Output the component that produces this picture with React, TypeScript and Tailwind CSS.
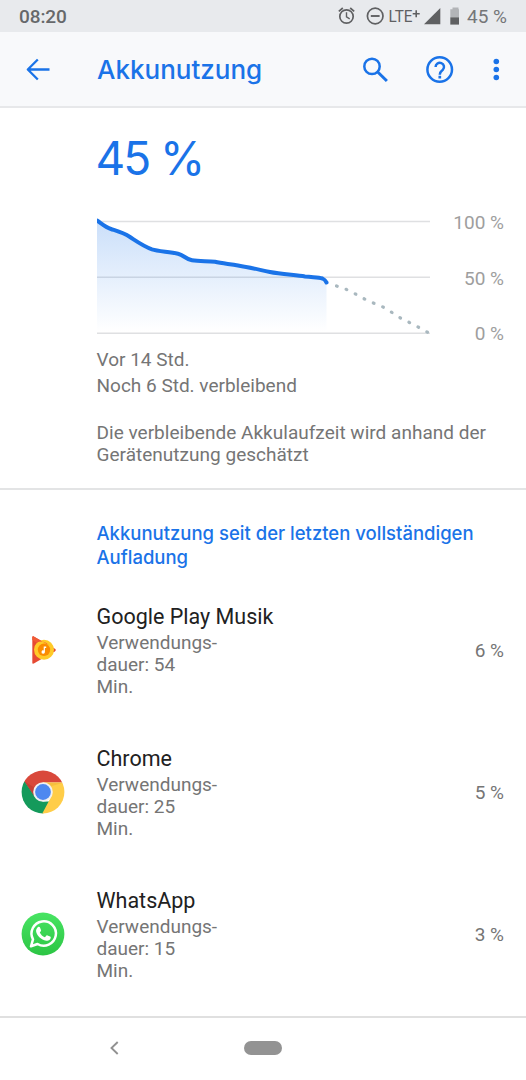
import React from "react";

const body = "font-['Roboto',sans-serif] text-[#757575] text-[19px] leading-[22.3px]";

function PlayMusicIcon() {
  return (
    <svg className="h-[44px] w-[44px]" viewBox="0 0 44 44">
      <path d="M11.3 9.2v25.6c0 .8.8 1.200 1.500.8L34 23.300c1-.6 1-2 0-2.600L12.800 8.400c-.7-.4-1.500 0-1.500.8z" fill="#e64a33" />
      <circle cx="23" cy="21.700" r="10" fill="#ffca28" />
      <path d="M12.700 8.400 28 17.200a9.700 9.700 0 0 0-12.500-2.400L11.300 12V9.200c0-.8.7-1.200 1.400-.8z" fill="#f05a35" />
      <circle cx="23" cy="21.800" r="6.200" fill="#fb8c00" />
      <path d="M22.700 18.500h2.500v1.600h-1.300v4a1.700 1.700 0 1 1-1.200-1.600z" fill="#fff" />
    </svg>
  );
}

function ChromeIcon() {
  return (
    <svg className="h-[44px] w-[44px]" viewBox="0 0 44 44">
      <defs>
        <clipPath id="chrome-disc"><circle cx="22" cy="22" r="21.400" /></clipPath>
      </defs>
      <g clipPath="url(#chrome-disc)">
        <path d="M0 0h44v12.500H22L13.700 27 0 7z" fill="#d9483b" />
        <path d="M3.500 11.500 13.800 26.800 22 31.500h8.500L22 44H0V11z" fill="#149a5b" />
        <path d="M22 12.500h22V44H21l9.200-17.200z" fill="#ffcd48" />
        <path d="M22 12.500h21l-15.500 4.500z" fill="#e6a62d" opacity=".35" />
        <path d="m3.500 11.500 9.400 14.900 2-8z" fill="#9c3025" opacity=".3" />
      </g>
      <circle cx="22" cy="22" r="9.800" fill="#f1f1f1" />
      <circle cx="22" cy="22" r="7.900" fill="#4d88f0" />
    </svg>
  );
}

function WhatsAppIcon() {
  return (
    <svg className="h-[44px] w-[44px]" viewBox="0 0 44 44">
      <defs>
        <linearGradient id="wa-green" x1="0" y1="0" x2="0" y2="1">
          <stop offset="0" stopColor="#48e463" />
          <stop offset="1" stopColor="#2cc544" />
        </linearGradient>
      </defs>
      <circle cx="22" cy="22" r="21.400" fill="url(#wa-green)" />
      <path d="M10 34.300l2-7A12.200 12.200 0 1 1 16.500 32z" fill="none" stroke="#fff" strokeWidth="2.500" strokeLinejoin="round" />
      <path transform="translate(-.4 -.5)" d="M17.400 15.500c.6-.5 1.600-.4 1.900.3l1.100 2.600c.2.500.1.900-.2 1.300l-1 1.200c1.100 2.300 2.800 3.900 5.100 4.900l1.400-1.600c.3-.4.700-.5 1.200-.3l2.600 1.200c.6.300.8.700.6 1.500-.5 2.200-2.500 3-4.500 2.600-5.200-1.100-8.800-4.700-10-8.700-.5-1.900.4-3.900 1.800-5z" fill="#fff" />
    </svg>
  );
}

const apps = [
  { name: "Google Play Musik", minutes: 54, share: "6 %", icon: <PlayMusicIcon /> },
  { name: "Chrome", minutes: 25, share: "5 %", icon: <ChromeIcon /> },
  { name: "WhatsApp", minutes: 15, share: "3 %", icon: <WhatsAppIcon /> },
];

const curve =
  "M0 4.500C4 7 8 11 14 13C20 15 26 16.500 33 21C40 25.500 46 30 55 33.300C61 35.300 72 35.700 81 37.700C87 39 88 43 95 44.200C102 45.300 110 45 118 45.800C125 47.500 133 48 141 49.500C153 51.500 161 53.500 173 56C183 58 198 59 208 60.500C217 61.500 221 61 225.500 62.500Q228 63.500 229.500 66.500";

function Chart() {
  return (
    <svg className="h-[124px] w-[340px] shrink-0" viewBox="0 0 340 124">
      <defs>
        <linearGradient id="usage-fill" gradientUnits="userSpaceOnUse" x1="0" y1="4" x2="0" y2="116">
          <stop offset="0" stopColor="#1a73e8" stopOpacity=".23" />
          <stop offset="1" stopColor="#1a73e8" stopOpacity="0" />
        </linearGradient>
        <clipPath id="plot"><rect x="0" y="0" width="340" height="124" /></clipPath>
      </defs>
      <path d="M0 5.500h333M0 61.200h333M0 117.200h333" stroke="#dfe0e2" strokeWidth="1.500" />
      <path d={curve + "V117H0Z"} fill="url(#usage-fill)" />
      <path d={curve} fill="none" stroke="#1a73e8" strokeWidth="4" strokeLinecap="round" clipPath="url(#plot)" />
      <path d="M239.500 70L249.500 73.500L258.500 78L267.500 83L277 87.300L286 91L295 96.500L303.500 102L312.500 106.500L321.500 111.200L330.500 116.200" fill="none" stroke="#a9b8bf" strokeWidth="3.200" strokeLinecap="round" strokeDasharray="0.800 9.350" />
    </svg>
  );
}

export default function App() {
  return (
    <div className="flex h-[1080px] w-[526px] flex-col overflow-hidden bg-white">
      <div className="flex h-[32px] shrink-0 items-center bg-[#e8eaed] px-[19px] font-['Roboto',sans-serif] font-medium text-[#66686a]">
        <span className="pt-[2px] text-[19px] leading-[22px] tracking-[-0.100px]">08:20</span>
        <svg className="ml-auto h-[32px] w-[122px] shrink-0" viewBox="337 0 122 32">
          <g fill="none" stroke="#5f6062">
            <circle cx="346.500" cy="16.500" r="6.700" strokeWidth="1.700" />
            <path d="M346.500 12.300v4.600l3.200 1.900" strokeWidth="1.400" />
            <path d="M338.800 11.300l4-3.300M354.200 11.300l-4-3.300" strokeWidth="1.700" />
            <circle cx="375.200" cy="16" r="7.800" strokeWidth="1.700" />
            <path d="M370.800 16h8.800" strokeWidth="1.900" />
          </g>
          <text x="388.500" y="21.800" fontSize="16.500" textLength="24" lengthAdjust="spacingAndGlyphs" fontFamily="Roboto" fontWeight="400" fill="#5f6062">LTE</text>
          <path d="M412.700 13.700h7M416.200 10.200v7" stroke="#5f6062" strokeWidth="1.600" />
          <path d="M424 24.300L440.300 8v16.300z" fill="#5f6062" />
          <path d="M450.300 9.300h2.200V7.500h6v1.800h2v8h-10.200z" fill="#b2b4b7" />
          <path d="M450.300 17.300h10.200v7.300h-10.200z" fill="#5f6062" />
        </svg>
        <span className="ml-[8px] pt-[2px] text-[19px] font-normal leading-[22px] text-[#757678]">45 %</span>
      </div>

      <header className="flex h-[76px] shrink-0 items-center border-b-2 border-[#e7e8ea] bg-[#f8f9fb] font-['Inter',sans-serif] text-[#1a73e8]">
        <svg className="ml-[26px] h-[24px] w-[24px]" viewBox="0 0 24 24" fill="none" stroke="currentColor" strokeWidth="2.300">
          <path d="M23.500 12.500H2M11.800 2.500L1.800 12.500l10 10" strokeLinejoin="round" />
        </svg>
        <h1 className="ml-[47px] whitespace-nowrap pt-[2px] text-[26px] font-medium leading-[32px]">Akkunutzung</h1>
        <svg className="ml-auto h-[76px] w-[150px] shrink-0" viewBox="355 31 150 76" fill="none" stroke="currentColor">
          <circle cx="372" cy="66.400" r="7.700" strokeWidth="2.500" />
          <path d="M377.700 72l9.200 9" strokeWidth="3" />
          <circle cx="439.700" cy="69.500" r="12.300" strokeWidth="2.500" />
          <path d="M435.600 67a4.200 4.200 0 1 1 7.200 2.900c-1.900 1.700-3 2.200-3 4.800" strokeWidth="2.500" />
          <path d="M439.800 75.800v2.700" strokeWidth="2.700" />
          <g fill="currentColor" stroke="none">
            <circle cx="496.300" cy="61.500" r="2.800" />
            <circle cx="496.300" cy="69.500" r="2.800" />
            <circle cx="496.300" cy="77.500" r="2.800" />
          </g>
        </svg>
        <span className="w-[21px] shrink-0" />
      </header>

      <section className="flex h-[382px] shrink-0 flex-col border-b-2 border-[#e3e4e5] pl-[96.500px]">
        <div className="mt-[22px] -ml-px font-['Inter',sans-serif] text-[46px] leading-[56px] tracking-[-2px] text-[#1a73e8]">45 %</div>
        <div className="mt-[30px] flex h-[124px] pr-[22px]">
          <Chart />
          <div className="-mt-[4px] ml-auto flex flex-col items-end gap-[33.700px] font-['Roboto',sans-serif] text-[19px] leading-[22px] text-[#9e9e9e]">
            <span className="whitespace-nowrap">100 %</span>
            <span>50 %</span>
            <span>0 %</span>
          </div>
        </div>
        <div className={body + " mt-[9px]"}>Vor 14 Std.</div>
        <div className={body + " mt-[4px]"}>Noch 6 Std. verbleibend</div>
        <div className={body + " mt-[24.500px] whitespace-nowrap tracking-[0.020px]"}>
          Die verbleibende Akkulaufzeit wird anhand der<br />Gerätenutzung geschätzt
        </div>
      </section>

      <main className="flex h-[526px] shrink-0 flex-col">
        <h2 className="mt-[31px] whitespace-nowrap pl-[96.500px] font-['Inter',sans-serif] text-[18.500px] font-medium leading-[24px] text-[#1a73e8]">
          Akkunutzung seit der letzten vollständigen<br />Aufladung
        </h2>
        <div className="mt-[10px] flex flex-col">
          {apps.map((app) => (
            <div key={app.name} className="flex h-[142px] items-center">
              <div className="flex w-[96.500px] shrink-0 pl-[21px]">{app.icon}</div>
              <div className="pt-[2px]">
                <div className="whitespace-nowrap font-['Roboto',sans-serif] text-[21.500px] leading-[26px] text-[#212121]">{app.name}</div>
                <div className={body + " mt-[2px]"}>
                  Verwendungs-<br />dauer: {app.minutes}<br />Min.
                </div>
              </div>
              <div className={body + " ml-auto pr-[22px] pt-[2px]"}>{app.share}</div>
            </div>
          ))}
        </div>
      </main>

      <nav className="flex h-[64px] shrink-0 items-center border-t-2 border-[#e0e0e0] pb-[2px]">
        <svg className="ml-[109px] h-[14px] w-[11px]" viewBox="0 0 11 14" fill="none" stroke="#919191" strokeWidth="1.900">
          <path d="M8.700 1L2.500 7l6.200 6" />
        </svg>
        <div className="ml-[124px] h-[14px] w-[38px] rounded-full bg-[#939393]" />
      </nav>
    </div>
  );
}
